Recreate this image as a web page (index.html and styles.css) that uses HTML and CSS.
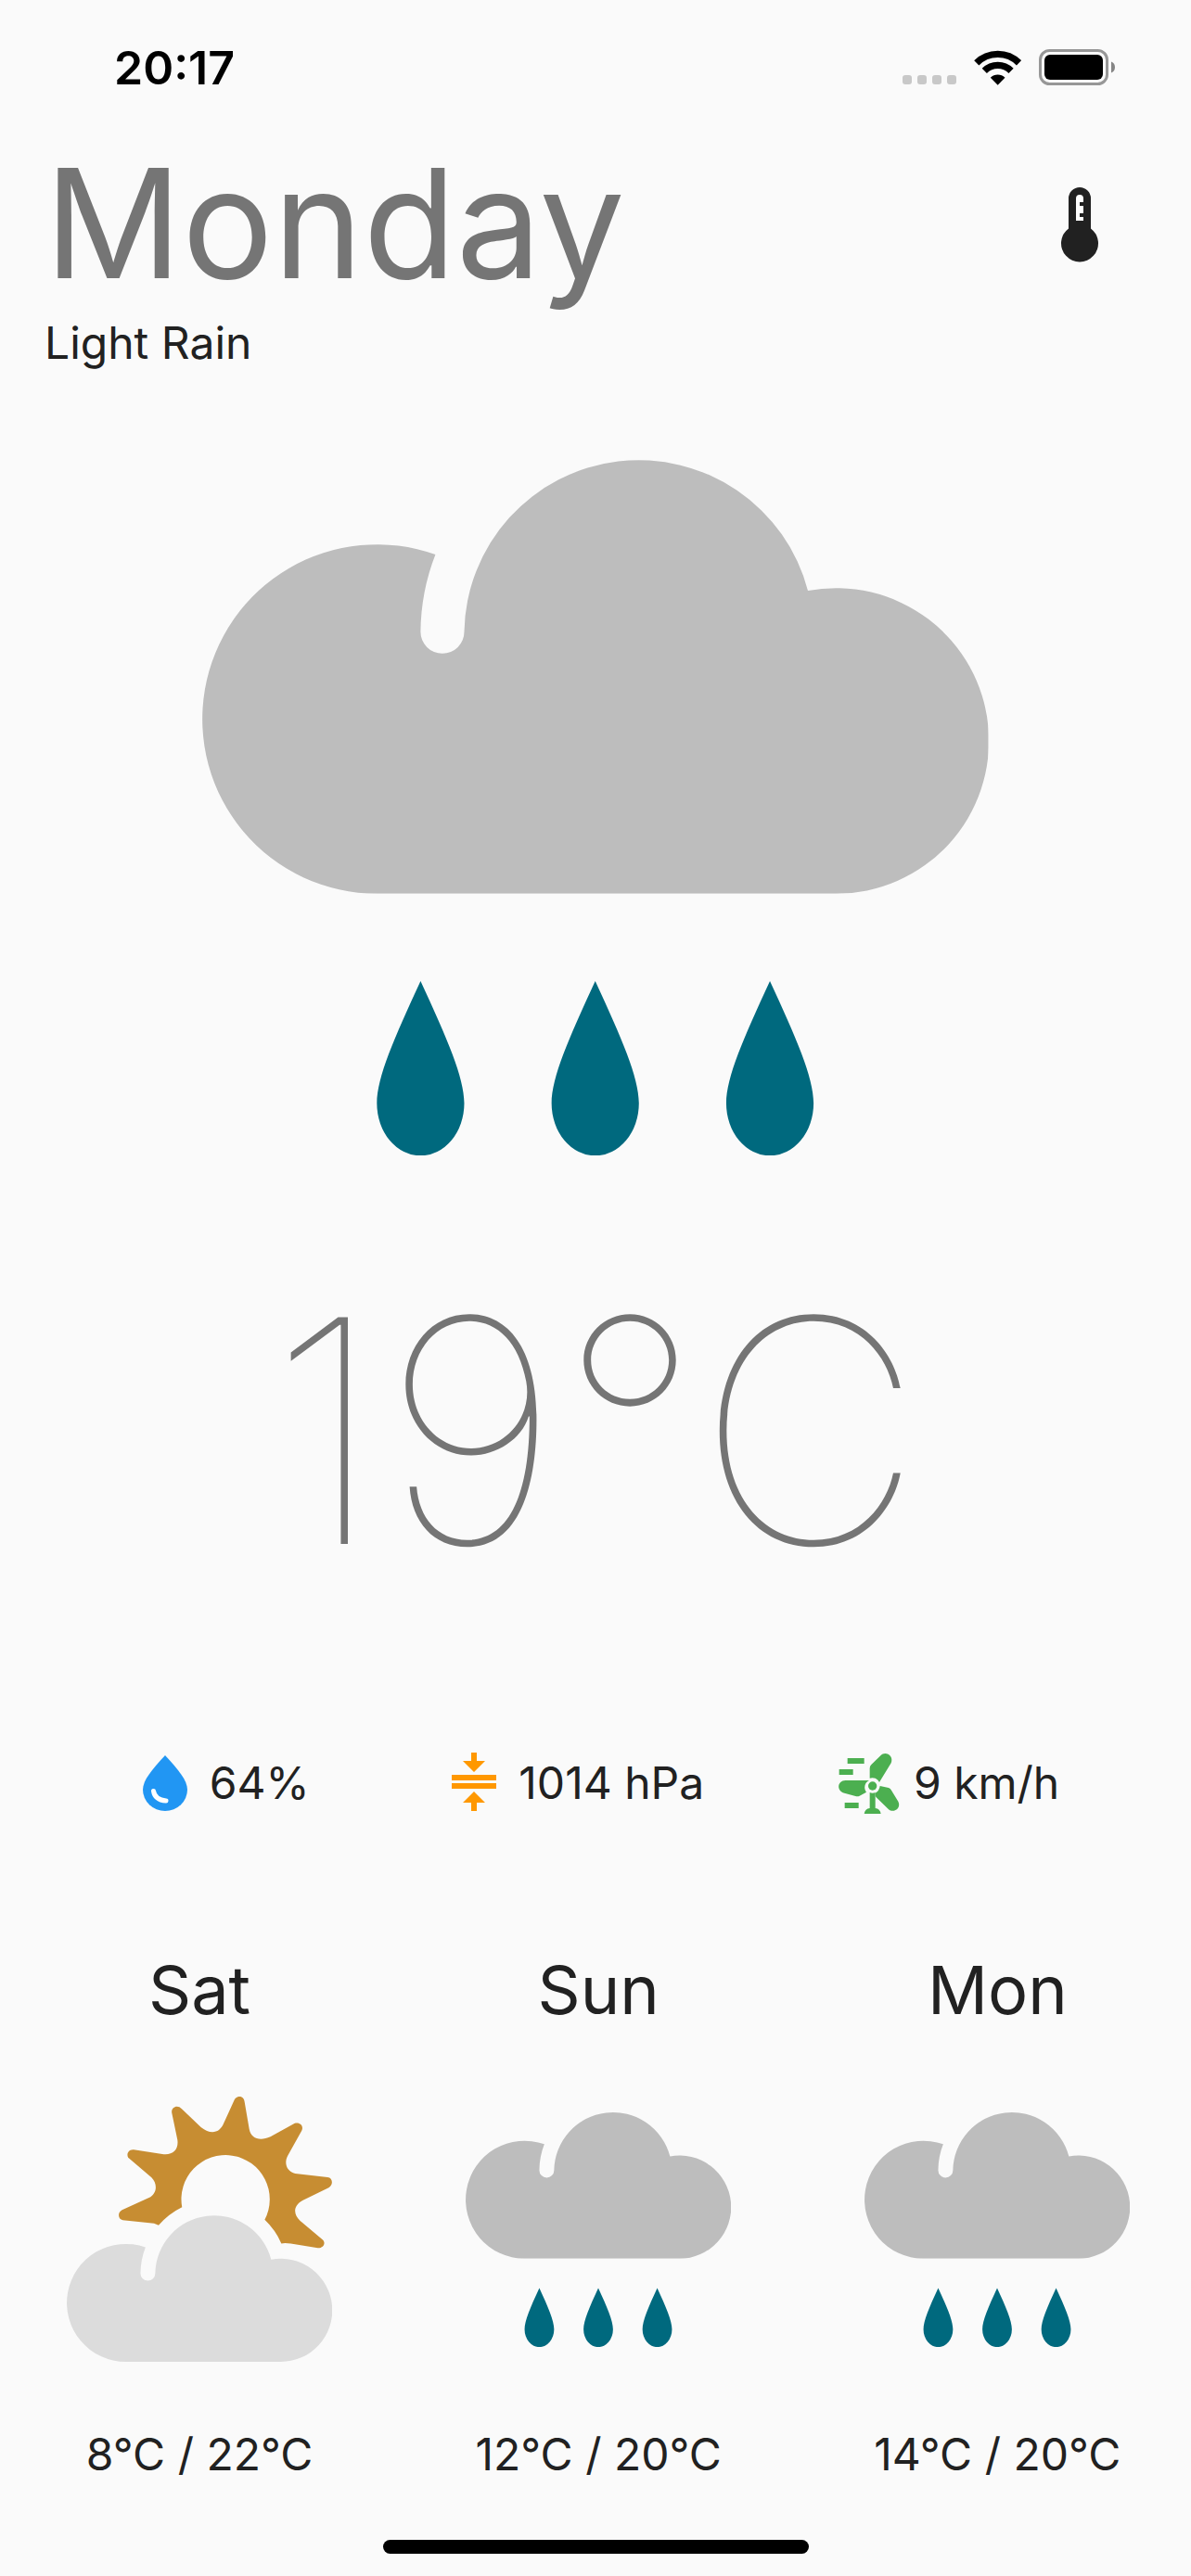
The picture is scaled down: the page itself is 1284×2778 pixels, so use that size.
FILE: index.html
```html
<!DOCTYPE html>
<html lang="en">
<head>
<meta charset="utf-8">
<meta name="viewport" content="width=device-width, initial-scale=1">
<title>Weather</title>
<link rel="stylesheet" href="styles.css">
</head>
<body>
<svg class="symbols" aria-hidden="true">
  <symbol id="cloud" viewBox="0 0 18 10">
    <path d="M4 10A4 4 0 1 1 5.34 2.23A5 5 0 0 0 5 4A.5 .5 0 0 0 6 4A4 4 0 0 1 13.87 3.06A3.5 3.5 0 1 1 14.5 10Z"/>
  </symbol>
  <symbol id="rain" viewBox="0 0 18 16">
    <use href="#cloud" width="18" height="10" fill="#bdbdbd"/>
    <path fill="#00697e" d="M5 12C5.6 13.3 6 14.2 6 14.8A1 1.2 0 0 1 4 14.8C4 14.2 4.4 13.3 5 12ZM9 12C9.6 13.3 10 14.2 10 14.8A1 1.2 0 0 1 8 14.8C8 14.2 8.4 13.3 9 12ZM13 12C13.6 13.3 14 14.2 14 14.8A1 1.2 0 0 1 12 14.8C12 14.2 12.4 13.3 13 12Z"/>
  </symbol>
  <symbol id="partly-cloudy" viewBox="0 0 18 18">
    <path fill="#c78d32" d="M7.82 7.51A3 3 0 1 1 13.43 8.36A5 5 0 0 1 14.56 9.97Q14.8 9.9 15.2 9.98L17.03 10.28C17.4 10.3 17.6 9.95 17.37 9.73L15.82 8.41C15.4 8.05 15.3 7.4 16.03 7.03L17.77 6.19C18.1 6 18.05 5.5 17.7 5.47L15.5 5.22C14.95 5.1 14.7 4.55 15 4L15.94 2.31C16.1 2 15.8 1.7 15.44 1.83L13.82 2.72C13.1 3.05 12.5 2.85 12.38 2.2L12.06 .34C12 -.08 11.55 -.08 11.38 .2L10.64 1.83C10.35 2.5 9.75 2.6 9.1 2.07L7.8 .84C7.5 .5 7.05 .75 7.13 1.11L7.51 2.94C7.6 3.6 7.2 4 6.48 3.9L4.55 3.61C4.15 3.55 4 4 4.22 4.19L5.75 5.49C6.2 5.95 6.1 6.6 5.58 6.86L3.75 7.7C3.4 7.9 3.5 8.35 3.8 8.38L5.92 8.6L6.23 8.74A5 5 0 0 1 7.82 7.51Z"/>
    <use href="#cloud" y="8" width="18" height="10" fill="#dcdcdc"/>
  </symbol>
</svg>

<div class="status-bar">
  <time class="clock">20:17</time>
  <div class="status-icons">
    <svg class="signal" viewBox="0 0 58 10" aria-hidden="true" fill="#c8c8c8">
      <rect width="10" height="10" rx="3"/><rect x="16" width="10" height="10" rx="3"/><rect x="32" width="10" height="10" rx="3"/><rect x="48" width="10" height="10" rx="3"/>
    </svg>
    <svg class="wifi" viewBox="330 101 153 114" aria-hidden="true">
      <path fill="none" stroke="#000" stroke-width="22" d="M338.4 142.4A97 97 0 0 1 475.6 142.4M363.9 167.9A61 61 0 0 1 450.1 167.9"/>
      <path d="M407 214L383.5 190A34 34 0 0 1 430.5 190Z"/>
    </svg>
    <svg class="battery" viewBox="0 0 82 39" aria-hidden="true">
      <rect x="1.5" y="1.5" width="72" height="36" rx="10" fill="none" stroke="#979797" stroke-width="3"/>
      <rect x="6" y="6" width="63" height="27" rx="6"/>
      <path fill="#858585" d="M78 13.5A6.5 6.5 0 0 1 78 25.5Z"/>
    </svg>
  </div>
</div>

<main class="weather">
  <header class="heading">
    <div class="titles">
      <h1 class="day">Monday</h1>
      <p class="summary">Light Rain</p>
    </div>
    <button class="unit-button" type="button" aria-label="Change temperature unit">
      <svg viewBox="0 0 24 24" aria-hidden="true">
        <path fill="#212121" d="M9 13.1V5a3 3 0 0 1 6 0V13.1A5 5 0 1 1 9 13.1Z"/>
        <path fill="#fff" d="M11 11V5a1 1 0 0 1 2 0V6H12V7H13V9H12V10H13V11Z"/>
      </svg>
    </button>
  </header>

  <svg class="hero" viewBox="0 0 18 16" role="img" aria-label="Rain"><use href="#rain"/></svg>

  <p class="temperature">19°C</p>

  <ul class="stats">
    <li class="stat">
      <svg class="stat-icon" viewBox="0 0 72 72" aria-hidden="true">
        <path fill="#2196f3" d="M36 6C50 21 60 33 60 43A24 23 0 0 1 12 43C12 33 22 21 36 6Z"/>
        <path fill="none" stroke="#fff" stroke-width="5" stroke-linecap="round" d="M23.5 44.5Q25 54 37 55"/>
      </svg>
      <span>64%</span>
    </li>
    <li class="stat">
      <svg class="stat-icon" viewBox="0 0 72 72" aria-hidden="true">
        <path fill="#ff9800" d="M33 3H39V12H48L36 24L24 12H33ZM12 27H60V33H12ZM12 36H60V42H12ZM36 45L48 57H39V66H33V57H24Z"/>
      </svg>
      <span>1014 hPa</span>
    </li>
    <li class="stat">
      <svg class="stat-icon" viewBox="37 48 216 216" aria-hidden="true" fill="#4caf50">
        <path d="M75 75H129V93H75ZM48 111H93V129H48ZM66 219H111V237H66Z"/>
        <path d="M147 140V108Q147 101 152 96L182 67C198 50 226 68 216 91L178 153A25 25 0 0 0 147 140Z"/>
        <path d="M145 147H69C40 148 40 182 65 188L101 198Q108 200 114 197L136 185A25 25 0 0 1 145 147Z"/>
        <path d="M180 165L208 171Q214 173 217 179L239 215C250 237 224 254 208 241L168 202Q165 199 165 194V188Q178 181 180 165Z"/>
        <path d="M147 186Q156 190 165 186V237Q180 238 183 255H129Q132 238 147 237Z"/>
        <circle cx="156" cy="165" r="14"/>
      </svg>
      <span>9 km/h</span>
    </li>
  </ul>

  <ul class="forecast">
    <li class="forecast-day">
      <h2 class="forecast-name">Sat</h2>
      <svg class="forecast-icon" viewBox="0 0 18 18" role="img" aria-label="Partly cloudy"><use href="#partly-cloudy"/></svg>
      <p class="forecast-range">8°C / 22°C</p>
    </li>
    <li class="forecast-day">
      <h2 class="forecast-name">Sun</h2>
      <svg class="forecast-icon" viewBox="0 0 18 18" role="img" aria-label="Rain"><use href="#rain" y="1" width="18" height="16"/></svg>
      <p class="forecast-range">12°C / 20°C</p>
    </li>
    <li class="forecast-day">
      <h2 class="forecast-name">Mon</h2>
      <svg class="forecast-icon" viewBox="0 0 18 18" role="img" aria-label="Rain"><use href="#rain" y="1" width="18" height="16"/></svg>
      <p class="forecast-range">14°C / 20°C</p>
    </li>
  </ul>
</main>

<div class="home-indicator"></div>
</body>
</html>
```

FILE: styles.css
```css
* {
  box-sizing: border-box;
}

body,
h1,
h2,
p,
ul {
  margin: 0;
  padding: 0;
}

body {
  display: flex;
  flex-direction: column;
  min-height: 100vh;
  overflow-x: hidden;
  background: #fafafa;
  color: #212121;
  font-family: Inter, "Liberation Sans", sans-serif;
  font-size: 48px;
  line-height: 56px;
}

h1,
h2 {
  font-weight: 400;
}

ul {
  list-style: none;
}

svg {
  display: block;
  flex: none;
}

.symbols {
  position: absolute;
  width: 0;
  height: 0;
}

.status-bar {
  display: flex;
  justify-content: space-between;
  padding: 44px 82px 0 123px;
  color: #000;
}

.clock {
  font-size: 50px;
  line-height: 58px;
  font-weight: 600;
}

.status-icons {
  display: flex;
  align-items: flex-end;
  gap: 19px;
  height: 48px;
}

.signal {
  width: 58px;
  height: 10px;
  margin-bottom: 1px;
}

.wifi {
  width: 51px;
  height: 38px;
}

.battery {
  width: 82px;
  height: 39px;
}

.weather {
  display: flex;
  flex-direction: column;
}

.heading {
  display: flex;
  justify-content: space-between;
  padding: 40px 48px 0;
}

.titles {
  display: flex;
  flex-direction: column;
  gap: 2px;
}

.day {
  color: #757575;
  font-size: 164px;
  line-height: 198px;
}

.unit-button {
  width: 144px;
  height: 144px;
  margin-top: 28px;
  padding: 24px;
  border: 0;
  background: none;
}

.unit-button svg {
  width: 96px;
  height: 96px;
}

.hero {
  width: 66%;
  margin: 95px auto 0;
}

.temperature {
  margin-top: 100px;
  color: #757575;
  text-align: center;
  font-size: 336px;
  line-height: 394px;
  font-weight: 100;
}

.stats {
  display: flex;
  justify-content: space-evenly;
  margin-top: 147px;
}

.stat {
  display: flex;
  align-items: center;
  gap: 12px;
}

.stat-icon {
  width: 72px;
  height: 72px;
}

.forecast {
  display: flex;
  margin-top: 143px;
}

.forecast-day {
  display: flex;
  flex: 0 0 33.5%;
  flex-direction: column;
  align-items: center;
}

.forecast-name {
  font-size: 72px;
  line-height: 88px;
}

.forecast-icon {
  width: 286px;
  height: 286px;
  margin: 71px 0 72px;
}

.home-indicator {
  width: 459px;
  height: 15px;
  margin: auto auto 24px;
  border-radius: 8px;
  background: #000;
}
```
